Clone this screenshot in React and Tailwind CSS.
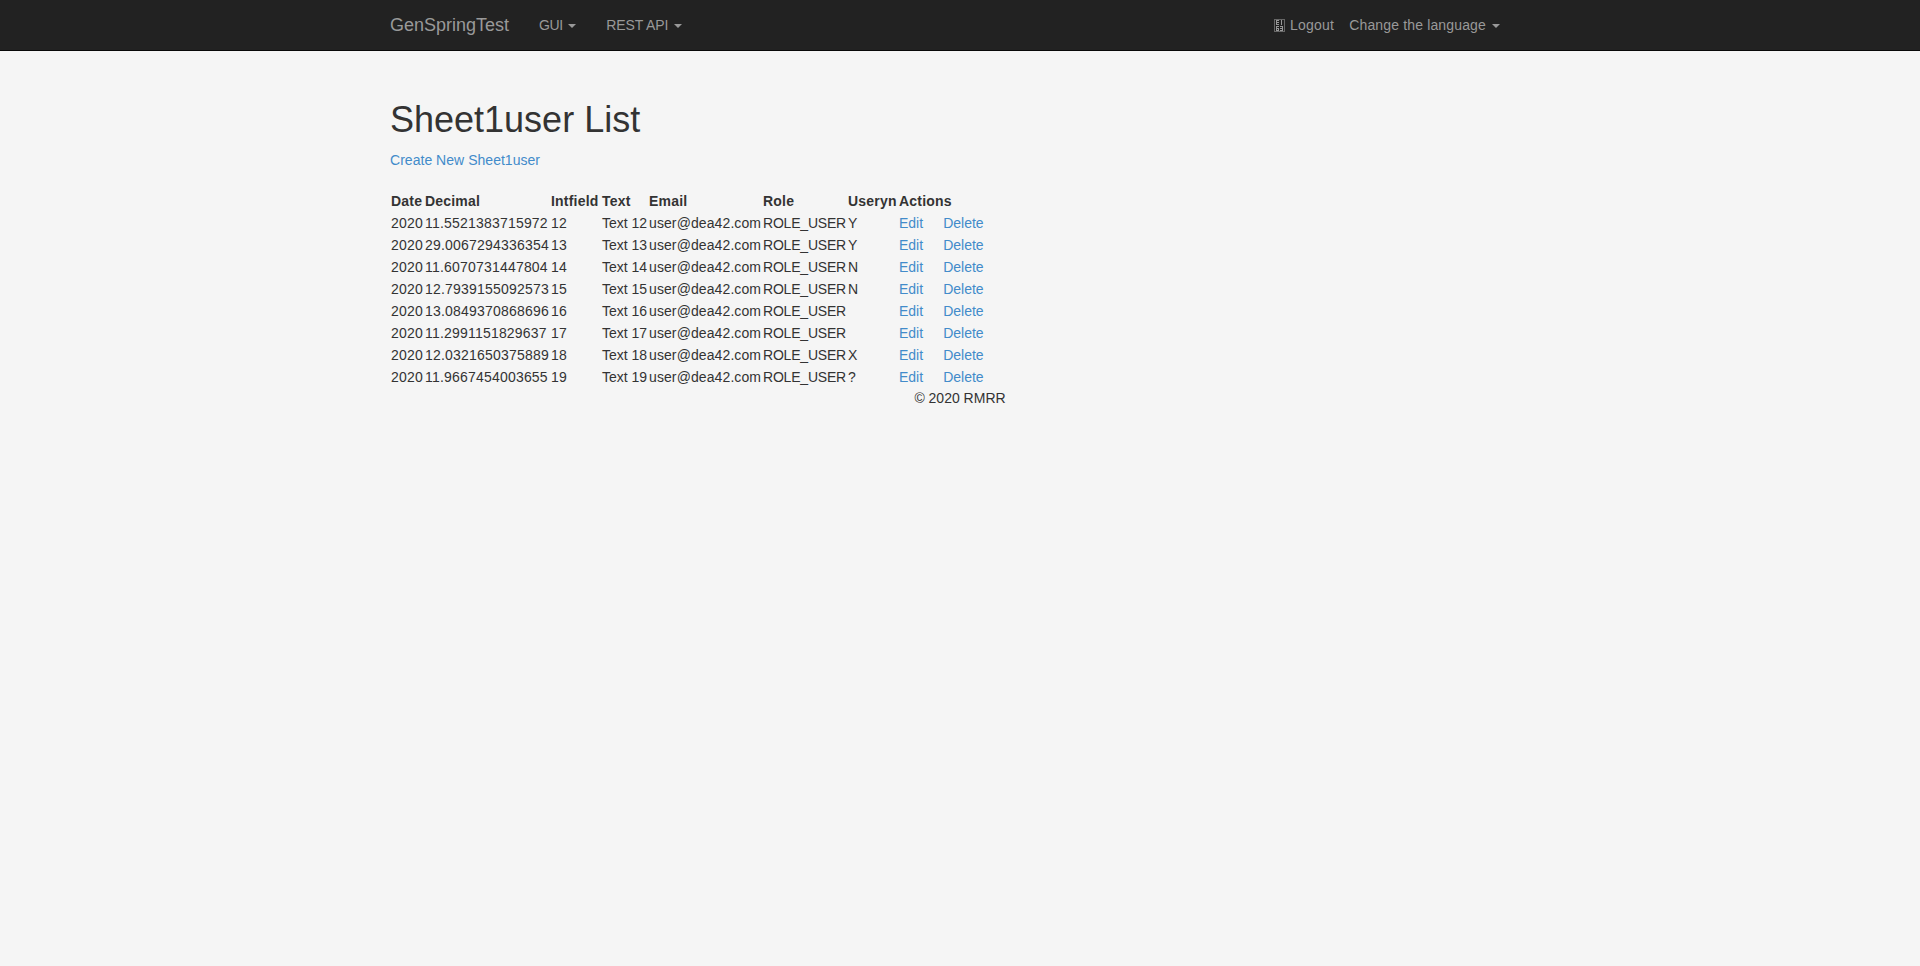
const rows = [
  ["11.5521383715972", 12, "Y"],
  ["29.0067294336354", 13, "Y"],
  ["11.6070731447804", 14, "N"],
  ["12.7939155092573", 15, "N"],
  ["13.0849370868696", 16, ""],
  ["11.2991151829637", 17, ""],
  ["12.0321650375889", 18, "X"],
  ["11.9667454003655", 19, "?"],
];

const columns = [
  ["Date", "w-[34px]"],
  ["Decimal", "w-[126px]"],
  ["Intfield", "w-[51px]"],
  ["Text", "w-[47px]"],
  ["Email", "w-[114px]"],
  ["Role", "w-[85px]"],
  ["Useryn", "w-[51px]"],
  ["Actions", "w-[88px]"],
];

function Caret() {
  return (
    <span className="ml-0.5 inline-block h-0 w-0 border-x-4 border-t-4 border-x-transparent border-t-[#999999] align-middle" />
  );
}

function GlyphBox() {
  return (
    <svg className="mr-px inline-block h-[13px] w-[11px] align-[-2px]" viewBox="0 0 11 13" shapeRendering="crispEdges" aria-hidden="true">
      <path d="M.5 .5h10v12h-10z" fill="none" stroke="#666" />
      <path
        fill="#999"
        fillRule="evenodd"
        d="M2 1h3v1H3v1h2v1H3v1h2v1H2zM7 1h1v5H7zM2 7h3v1H3v1h2v3H2zM3 10v1h1v-1zM6 7h3v5H6v-1h2v-1H6V9h2V8H6z"
      />
    </svg>
  );
}

function Cell({ className = "", children }) {
  return <td className={`p-px whitespace-nowrap ${className}`}>{children}</td>;
}

export default function App() {
  return (
    <div className="min-h-screen bg-[#f5f5f5] font-['Liberation_Sans',Arial,sans-serif] text-[14px] leading-5 text-[#333333]">
      <nav className="h-[51px] border-b border-[#080808] bg-[#222222] text-[#999999]">
        <div className="mx-auto flex h-[50px] w-[1140px] items-center">
          <a href="#" className="mr-[30px] text-[18px]">GenSpringTest</a>
          <a href="#" className="mr-[30px] tracking-[-0.4px]">GUI <Caret /></a>
          <a href="#" className="tracking-[-0.1px]">REST API <Caret /></a>
          <div className="ml-auto flex gap-[15px] pr-[30px]">
            <a href="#" className="tracking-[0.22px]"><GlyphBox /> Logout</a>
            <a href="#" className="tracking-[0.15px]">Change the language <Caret /></a>
          </div>
        </div>
      </nav>
      <main className="mx-auto w-[1140px] pt-[49px]">
        <h1 className="mb-2.5 text-[36px] leading-[39.6px] font-medium">Sheet1user List</h1>
        <a href="#" className="block tracking-[0.03px] text-[#428bca]">Create New Sheet1user</a>
        <table className="mt-5 w-[596px] table-fixed border-collapse">
          <thead>
            <tr>
              {columns.map(([label, width]) => (
                <th key={label} className={`p-px text-left font-bold tracking-[0.2px] whitespace-nowrap ${width}`}>{label}</th>
              ))}
            </tr>
          </thead>
          <tbody>
            {rows.map(([decimal, n, flag]) => (
              <tr key={n}>
                <Cell className="tracking-[0.2px]">2020</Cell>
                <Cell className="tracking-[0.2px]">{decimal}</Cell>
                <Cell className="tracking-[0.2px]">{n}</Cell>
                <Cell>Text {n}</Cell>
                <Cell className="tracking-[0.1px]">user@dea42.com</Cell>
                <Cell className="tracking-[-0.2px]">ROLE_USER</Cell>
                <Cell>{flag}</Cell>
                <Cell>
                  <a href="#" className="mr-5 text-[#428bca]">Edit</a>
                  <a href="#" className="text-[#428bca]">Delete</a>
                </Cell>
              </tr>
            ))}
          </tbody>
        </table>
        <footer className="text-center">© 2020 RMRR</footer>
      </main>
    </div>
  );
}
